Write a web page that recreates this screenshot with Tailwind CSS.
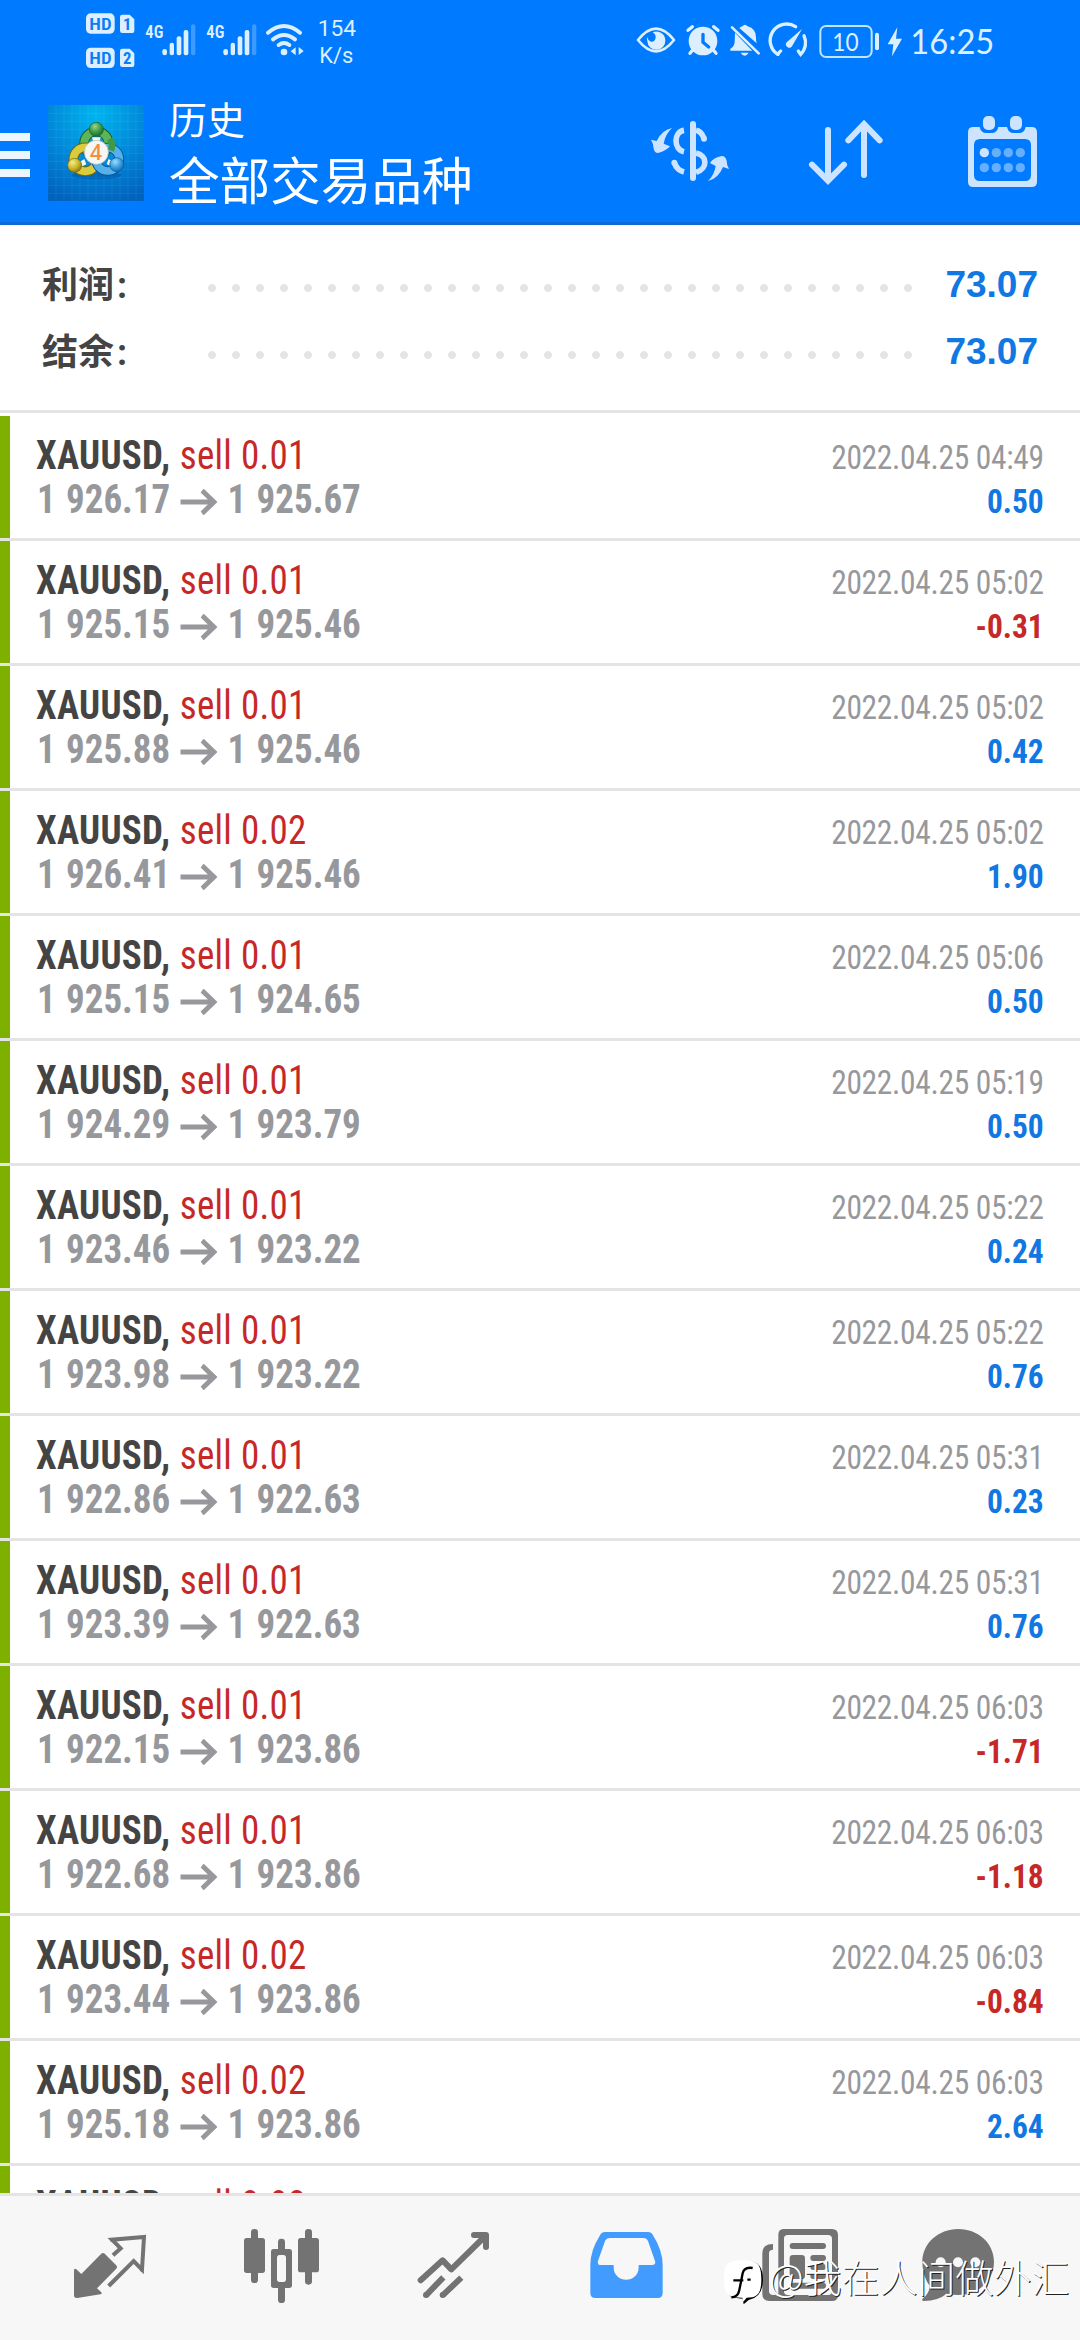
<!DOCTYPE html>
<html lang="zh-CN">
<head>
<meta charset="utf-8">
<title>历史</title>
<script src="https://cdn.jsdelivr.net/npm/@tailwindcss/browser@4"></script>
</head>
<body class="bg-white font-[Roboto,'Noto_Sans_CJK_SC',sans-serif]">
<div class="relative flex h-[2340px] w-[1080px] flex-col overflow-hidden">

<!-- header -->
<header class="flex h-[225px] shrink-0 flex-col border-b-3 border-[#0b6cd4] bg-[#007aff]">
  <div class="flex h-20 shrink-0">
    <svg class="h-20 w-[360px]" viewBox="0 0 1080 240" fill="#dcefff">
      <rect x="258" y="40" width="86" height="61" rx="14"/>
      <rect x="258" y="143" width="86" height="61" rx="14"/>
      <path d="M367 44h22l14 14v35a6 6 0 0 1-6 6h-30a7 7 0 0 1-7-7V51a7 7 0 0 1 7-7z"/>
      <path d="M367 146h22l14 14v35a6 6 0 0 1-6 6h-30a7 7 0 0 1-7-7v-41a7 7 0 0 1 7-7z"/>
      <g fill="#0a7cf5" font-family="Roboto Condensed" font-weight="600">
        <text x="268" y="89" font-size="51" textLength="67" lengthAdjust="spacingAndGlyphs">HD</text>
        <text x="268" y="192" font-size="51" textLength="67" lengthAdjust="spacingAndGlyphs">HD</text>
        <text x="369" y="91" font-size="50" font-weight="700">1</text>
        <text x="369" y="193" font-size="50" font-weight="700">2</text>
      </g>
      <g id="sig">
        <text x="436" y="113" font-size="53" font-weight="600" font-family="Roboto Condensed" textLength="54" lengthAdjust="spacingAndGlyphs">4G</text>
        <rect x="487" y="147" width="14" height="19" rx="7"/>
        <rect x="509" y="128" width="13" height="38" rx="6"/>
        <rect x="530" y="109" width="14" height="57" rx="6"/>
        <rect x="551" y="90" width="14" height="76" rx="6"/>
        <rect x="573" y="73" width="13" height="93" rx="6" opacity=".28"/>
      </g>
      <use href="#sig" x="183"/>
      <g fill="none" stroke="#dcefff" stroke-width="12" stroke-linecap="round">
        <path d="M804 98Q852 58 900 98"/><path d="M819 118Q852 92 885 118"/><path d="M836 135Q852 123 868 135"/>
      </g>
      <circle cx="852" cy="156" r="10"/>
      <path d="M872 154l15-12v24zM911 153l-15-12v24z"/>
      <g font-family="Roboto"  font-size="68">
        <text x="953" y="108" textLength="115" lengthAdjust="spacingAndGlyphs">154</text>
        <text x="958" y="189" textLength="102" lengthAdjust="spacingAndGlyphs">K/s</text>
      </g>
    </svg>
    <svg class="ml-[240px] h-20 w-[480px]" viewBox="0 0 1440 240" fill="#dcefff">
      <path d="M114 120Q168 52 222 120Q168 188 114 120z" fill="none" stroke="#dcefff" stroke-width="8" stroke-linejoin="round"/>
      <path d="M141 110C146 130 166 130 167 112Q167 102 158 97C176 89 196 102 196 121A27 27 0 0 1 142 124Q140 117 141 110z"/>
      <circle cx="309" cy="123" r="43"/>
      <path d="M264 91l13-11M354 91l-13-11M278 150l-8 10M340 150l8 10" stroke="#dcefff" stroke-width="10" stroke-linecap="round"/>
      <path d="M309 103v24l17 14" fill="none" stroke="#007aff" stroke-width="10" stroke-linecap="round"/>
      <path d="M405 98l52 54h-66v-6q12-6 13-20z"/>
      <path d="M418 84q6-4 9-5 8-9 16 0 25 7 25 33 0 14 2 18zM422 158h24q-12 19-24 0z"/>
      <path d="M396 82l80 78" stroke="#dcefff" stroke-width="8" stroke-linecap="round"/>
      <path d="M534 163q4-7 8-10M533 163A49 49 0 0 1 587 80M612 107A49 49 0 0 1 602 163L595 153" fill="none" stroke="#dcefff" stroke-width="10" stroke-linecap="round"/>
      <path d="M606 87L576 139A10 10 0 1 1 560 127z"/>
      <rect x="661" y="78" width="154" height="93" rx="17" fill="none" stroke="#bfe5ff" stroke-width="6"/>
      <rect x="825" y="98" width="12" height="53" rx="6"/>
      <text x="697" y="152" font-family="Lato" font-size="76" textLength="79" lengthAdjust="spacingAndGlyphs">10</text>
      <path d="M892 82L863 133h17l-4 36 30-53h-18z"/>
      <text x="931" y="163" font-family="Lato" font-size="106" textLength="252" lengthAdjust="spacingAndGlyphs">16:25</text>
    </svg>
  </div>
  <div class="flex h-[142px] shrink-0">
    <div class="flex w-[30px] flex-col gap-2.5 pt-[53px]">
      <div class="h-2 bg-[#ecf6ff]"></div><div class="h-2 bg-[#ecf6ff]"></div><div class="h-2 bg-[#ecf6ff]"></div>
    </div>
    <svg class="mt-[25px] ml-[18px] size-24" viewBox="24 15 288 288">
      <defs>
        <radialGradient id="bg" cx=".5" cy=".1" r=".95"><stop offset="0" stop-color="#00b4ee"/><stop offset=".55" stop-color="#0086d8"/><stop offset="1" stop-color="#0062bd"/></radialGradient>
        <radialGradient id="gr" cx=".4" cy=".3" r=".8"><stop offset="0" stop-color="#9bd68a"/><stop offset=".5" stop-color="#3f9a45"/><stop offset="1" stop-color="#145f28"/></radialGradient>
        <radialGradient id="ye" cx=".35" cy=".3" r=".8"><stop offset="0" stop-color="#f6ee85"/><stop offset=".55" stop-color="#c9b52a"/><stop offset="1" stop-color="#7c6c0c"/></radialGradient>
        <radialGradient id="bl" cx=".4" cy=".3" r=".8"><stop offset="0" stop-color="#9bdcff"/><stop offset=".5" stop-color="#3a9fe0"/><stop offset="1" stop-color="#0d5ba8"/></radialGradient>
      </defs>
      <rect x="24" y="15" width="288" height="288" fill="url(#bg)"/>
      <path d="M48 15v288M72 15v288M96 15v288M120 15v288M144 15v288M168 15v288M192 15v288M216 15v288M240 15v288M264 15v288M288 15v288M24 40h288M24 64h288M24 88h288M24 112h288M24 136h288M24 160h288M24 184h288M24 208h288M24 232h288M24 256h288M24 280h288" stroke="#fff" stroke-opacity=".1" stroke-width="2"/>
      <ellipse cx="170" cy="226" rx="74" ry="12" fill="#003c80" opacity=".3"/>
      <g fill="none">
        <circle cx="169" cy="131" r="37" stroke="#15602c" stroke-width="29"/>
        <circle cx="169" cy="131" r="37" stroke="#5fb458" stroke-width="23"/>
        <circle cx="136" cy="178" r="36" stroke="#74680c" stroke-width="29"/>
        <circle cx="136" cy="178" r="36" stroke="#dacc3c" stroke-width="23"/>
        <circle cx="203" cy="178" r="35" stroke="#0b5499" stroke-width="29"/>
        <circle cx="203" cy="178" r="35" stroke="#55b1ea" stroke-width="23"/>
        <path d="M210 116q10 18 3 36" stroke="#3f9a45" stroke-width="20"/>
      </g>
      <path d="M156 112h26l-4 14h-18zM119 186l14-9 6 16-12 6zM206 177l13 8-6 14-13-7z" fill="#eef7f4"/>
      <circle cx="169" cy="88" r="21" fill="url(#gr)" stroke="#155e2a" stroke-width="2"/>
      <circle cx="104" cy="196" r="21" fill="url(#ye)" stroke="#74680c" stroke-width="2"/>
      <circle cx="230" cy="194" r="21" fill="url(#bl)" stroke="#0b5499" stroke-width="2"/>
      <circle cx="169" cy="157" r="36" fill="#f7f6f4" stroke="#b8b8b0" stroke-width="2"/>
      <text x="168" y="180" text-anchor="middle" font-family="Open Sans" font-weight="600" font-size="63" fill="#f0903c">4</text>
    </svg>
    <div class="ml-[25px] w-[431px] pt-[18px] font-['Noto_Sans_CJK_SC'] text-white">
      <div class="text-[38px] leading-10">历史</div>
      <div class="mt-2.5 text-[50.6px] leading-[60px]">全部交易品种</div>
    </div>
    <svg class="h-[142px] w-[480px]" viewBox="0 240 1440 426" fill="none" stroke="#cce4ff" stroke-width="18" stroke-linecap="round">
      <path d="M279 372V534"/>
      <path d="M252 391C220 396 220 448 252 455M288 391Q304 394 312 415M223 488Q230 510 252 516M288 459C322 466 325 505 288 517" stroke-linecap="butt" stroke-width="17"/>
      <g fill="#cce4ff" stroke="none">
        <circle cx="312" cy="416" r="9"/><circle cx="223" cy="488" r="9"/>
        <path d="M216 384Q196 402 191 431L210 439Q200 452 174 459Q164 459 161 446Q160 430 153 419L170 423Q184 391 216 384z"/>
        <path d="M324 543Q343 525 347 498L330 489Q340 473 366 468Q376 468 380 482Q380 495 387 507L369 501Q355 536 324 543z"/>
      </g>
      <path d="M684 390V540M636 494L684 542L732 494M792 525V374M745 421L792 372L839 421"/>
      <g fill="#cce4ff" stroke="none">
        <path fill-rule="evenodd" d="M1120 381h19q4 18 20 18h16q16 0 20-18h26q4 18 20 18h16q16 0 20-18h18q16 0 16 16v148q0 16-16 16h-175q-16 0-16-16V397q0-16 16-16zM1140 417q-18 0-18 18v90q0 18 18 18h135q18 0 18-18v-90q0-18-18-18z"/>
        <rect x="1149" y="348" width="36" height="42" rx="15"/><rect x="1230" y="348" width="36" height="42" rx="15"/>
        <circle cx="1153" cy="458" r="14"/>
        <g opacity=".5"><circle cx="1189" cy="458" r="14"/><circle cx="1225" cy="458" r="14"/><circle cx="1261" cy="458" r="14"/><circle cx="1153" cy="503" r="14"/><circle cx="1189" cy="503" r="14"/><circle cx="1225" cy="503" r="14"/><circle cx="1261" cy="503" r="14"/></g>
      </g>
    </svg>
  </div>
</header>

<!-- totals -->
<section class="h-[188px] shrink-0 border-b-3 border-[#e4e4e4] pt-[26px] text-[36px] leading-[67px] font-bold">
  <div class="flex h-[67px] items-center pr-[42px] pl-[42px]">
    <span class="w-[158px] text-[#444] font-['Noto_Sans_CJK_SC']">利润<span class="ml-[3px] font-[Roboto]">:</span></span>
    <span class="mt-[7px] h-6 w-[720px] bg-[radial-gradient(circle,#e4e4e4_3.5px,transparent_4.3px)] bg-[size:24px_24px]"></span>
    <span class="ml-auto text-[37px] text-[#1177e2] font-['Liberation_Sans']">73.07</span>
  </div>
  <div class="flex h-[67px] items-center pr-[42px] pl-[42px]">
    <span class="w-[158px] text-[#444] font-['Noto_Sans_CJK_SC']">结余<span class="ml-[3px] font-[Roboto]">:</span></span>
    <span class="mt-[7px] h-6 w-[720px] bg-[radial-gradient(circle,#e4e4e4_3.5px,transparent_4.3px)] bg-[size:24px_24px]"></span>
    <span class="ml-auto text-[37px] text-[#1177e2] font-['Liberation_Sans']">73.07</span>
  </div>
</section>

<!-- deals -->
<main id="deals" class="h-[1780px] shrink-0 overflow-hidden pt-[3px] font-['Roboto_Condensed']"></main>

<!-- bottom navigation -->
<nav class="flex h-[147px] shrink-0 border-t-3 border-[#e4e4e4] bg-[#f7f7f7]">
  <svg class="h-36 w-[180px]" viewBox="-180 -42 540 432">
    <path d="M42 183Q42 172 49 178L64 192L123 132Q129 126 135 132L168 165Q174 171 168 177L111 235L124 247Q127 251 121 253L52 264Q42 265 42 256z" fill="#737373"/>
    <path d="M159 136L182 115L156 89L252 81L246 179L221 153L146 228" fill="none" stroke="#737373" stroke-width="12"/>
    <circle cx="156" cy="90" r="6" fill="#737373"/><circle cx="245" cy="180" r="5.500" fill="#737373"/>
  </svg>
  <svg class="h-36 w-[200px]" viewBox="360 -42 600 432" fill="#737373">
    <rect x="573" y="57" width="21" height="162" rx="10"/><rect x="552" y="84" width="63" height="105" rx="8"/>
    <rect x="735" y="57" width="21" height="167" rx="10"/><rect x="714" y="84" width="63" height="103" rx="8"/>
    <rect x="654" y="86" width="21" height="193" rx="10"/><rect x="633" y="117" width="63" height="117" rx="8"/>
    <rect x="651" y="135" width="27" height="81" rx="8" fill="#f7f7f7"/>
  </svg>
  <svg class="h-36 w-40" viewBox="-60 -42 480 432" fill="none" stroke="#737373" stroke-width="18" stroke-linejoin="round">
    <path d="M62 211L128 151L154 178L256 78M222 75H258V111" stroke-linecap="round"/>
    <path d="M78 256L130 202M128 256L184 203"/>
    <g fill="#737373" stroke="none"><circle cx="78" cy="255" r="9"/><circle cx="128" cy="255" r="9"/></g>
  </svg>
  <svg class="h-36 w-[180px]" viewBox="420 -42 540 432">
    <path fill="#429bff" fill-rule="evenodd" d="M615 66H744Q754 66 759 76Q788 122 788 165V249Q788 264 773 264H586Q571 264 571 249V165Q571 122 600 76Q605 66 615 66zM631 84Q619 84 615 93L594 153Q591 165 603 165H641V172C641 222 716 222 716 172V165H757Q768 165 765 153L744 93Q740 84 730 84z"/>
  </svg>
  <svg class="h-36 w-[180px]" viewBox="0 -42 540 432" fill="#737373">
    <path d="M159 102V119Q147 119 147 130V243Q147 255 160 255H190V273H148Q127 273 127 252V130Q127 102 159 102z"/>
    <path fill-rule="evenodd" d="M190 57H336Q354 57 354 75V255Q354 273 336 273H175V75Q175 57 190 57zM203 75Q192 75 192 86V243Q192 255 203 255H324Q336 255 336 243V86Q336 75 324 75z"/>
    <rect x="209" y="99" width="109" height="18" rx="9"/><rect x="209" y="135" width="46" height="72" rx="10"/>
    <rect x="271" y="135" width="47" height="18" rx="9"/><rect x="271" y="162" width="47" height="18" rx="9"/><rect x="271" y="189" width="47" height="18" rx="9"/><rect x="209" y="218" width="109" height="18" rx="9"/>
  </svg>
  <svg class="h-36 w-[180px]" viewBox="540 -42 540 432">
    <path fill="#737373" d="M715 57C775 57 822 100 822 156C822 212 775 255 715 255Q696 255 680 251Q655 272 612 273Q603 272 609 265Q628 250 629 228Q607 197 607 156C607 100 655 57 715 57z"/>
    <g fill="#f7f7f7"><circle cx="662" cy="157" r="15"/><circle cx="714" cy="157" r="15"/><circle cx="766" cy="157" r="15"/></g>
  </svg>
</nav>

<!-- watermark -->
<div class="absolute top-[2250px] left-[720px] flex h-[56px] w-[360px] items-center">
  <svg class="h-[56px] w-[48px] shrink-0" viewBox="0 120 144 168">
    <path d="M78 153Q129 150 129 208Q129 262 86 270L71 283L68 266Q40 266 26 256L40 262" fill="#000"/>
    <path d="M68 151C112 151 124 162 124 207C124 252 112 263 80 263L70 275L67 263C24 263 12 252 12 207C12 162 24 151 68 151z" fill="#fff"/>
    <path d="M98 174Q72 170 68 190L58 240Q54 262 34 262M40 211H70M82 209H92" fill="none" stroke="#000" stroke-width="7"/>
  </svg>
  <span class="-mt-[5px] ml-px font-['Noto_Sans_CJK_SC'] text-[38px] leading-[56px] font-light whitespace-nowrap text-white [text-shadow:1px_1px_0_#222]">@我在人间做外汇</span>
</div>
</div>

<script>
const deals = [
  ['0.01','1 926.17','1 925.67','04:49','0.50'],
  ['0.01','1 925.15','1 925.46','05:02','-0.31'],
  ['0.01','1 925.88','1 925.46','05:02','0.42'],
  ['0.02','1 926.41','1 925.46','05:02','1.90'],
  ['0.01','1 925.15','1 924.65','05:06','0.50'],
  ['0.01','1 924.29','1 923.79','05:19','0.50'],
  ['0.01','1 923.46','1 923.22','05:22','0.24'],
  ['0.01','1 923.98','1 923.22','05:22','0.76'],
  ['0.01','1 922.86','1 922.63','05:31','0.23'],
  ['0.01','1 923.39','1 922.63','05:31','0.76'],
  ['0.01','1 922.15','1 923.86','06:03','-1.71'],
  ['0.01','1 922.68','1 923.86','06:03','-1.18'],
  ['0.02','1 923.44','1 923.86','06:03','-0.84'],
  ['0.02','1 925.18','1 923.86','06:03','2.64'],
  ['0.03','1 925.18','1 923.86','06:03','2.64'],
];
document.getElementById('deals').innerHTML = deals.map(([vol, open, close, time, profit]) => `
  <div class="flex h-[125px] border-b-3 border-[#e4e4e4]">
    <div class="w-2.5 bg-[#7eb000]"></div>
    <div class="ml-[26px] flex-1 origin-left scale-x-[0.925] pt-[18px] text-[40px] leading-[44px] whitespace-nowrap">
      <div><span class="tracking-[0.300px] font-bold text-[#444]">XAUUSD,</span> <span class="ml-px tracking-[0.300px] text-[#c62828]">sell ${vol}</span></div>
      <div class="flex items-center font-bold text-[#97989c]">
        <span class="w-[156px] pl-px [word-spacing:2px]">${open}</span>
        <svg class="mt-1 h-[26px] w-[40px]" viewBox="0 0 39 24" preserveAspectRatio="none" fill="none" stroke="#97989c" stroke-width="4.800"><path d="M0 12H36M23 1.500L35.500 12L23 22.500"/></svg>
        <span class="ml-[11px] [word-spacing:2px]">${close}</span>
      </div>
    </div>
    <div class="origin-right scale-x-[0.925] pt-[19px] pr-[39px] text-right text-[34px] leading-[44px] whitespace-nowrap">
      <div class="tracking-[-0.330px] text-[#97989c]">2022.04.25 ${time}</div>
      <div class="font-bold ${profit[0] === '-' ? 'text-[#c62828]' : 'text-[#1177e2]'}">${profit}</div>
    </div>
  </div>`).join('');
</script>
</body>
</html>
